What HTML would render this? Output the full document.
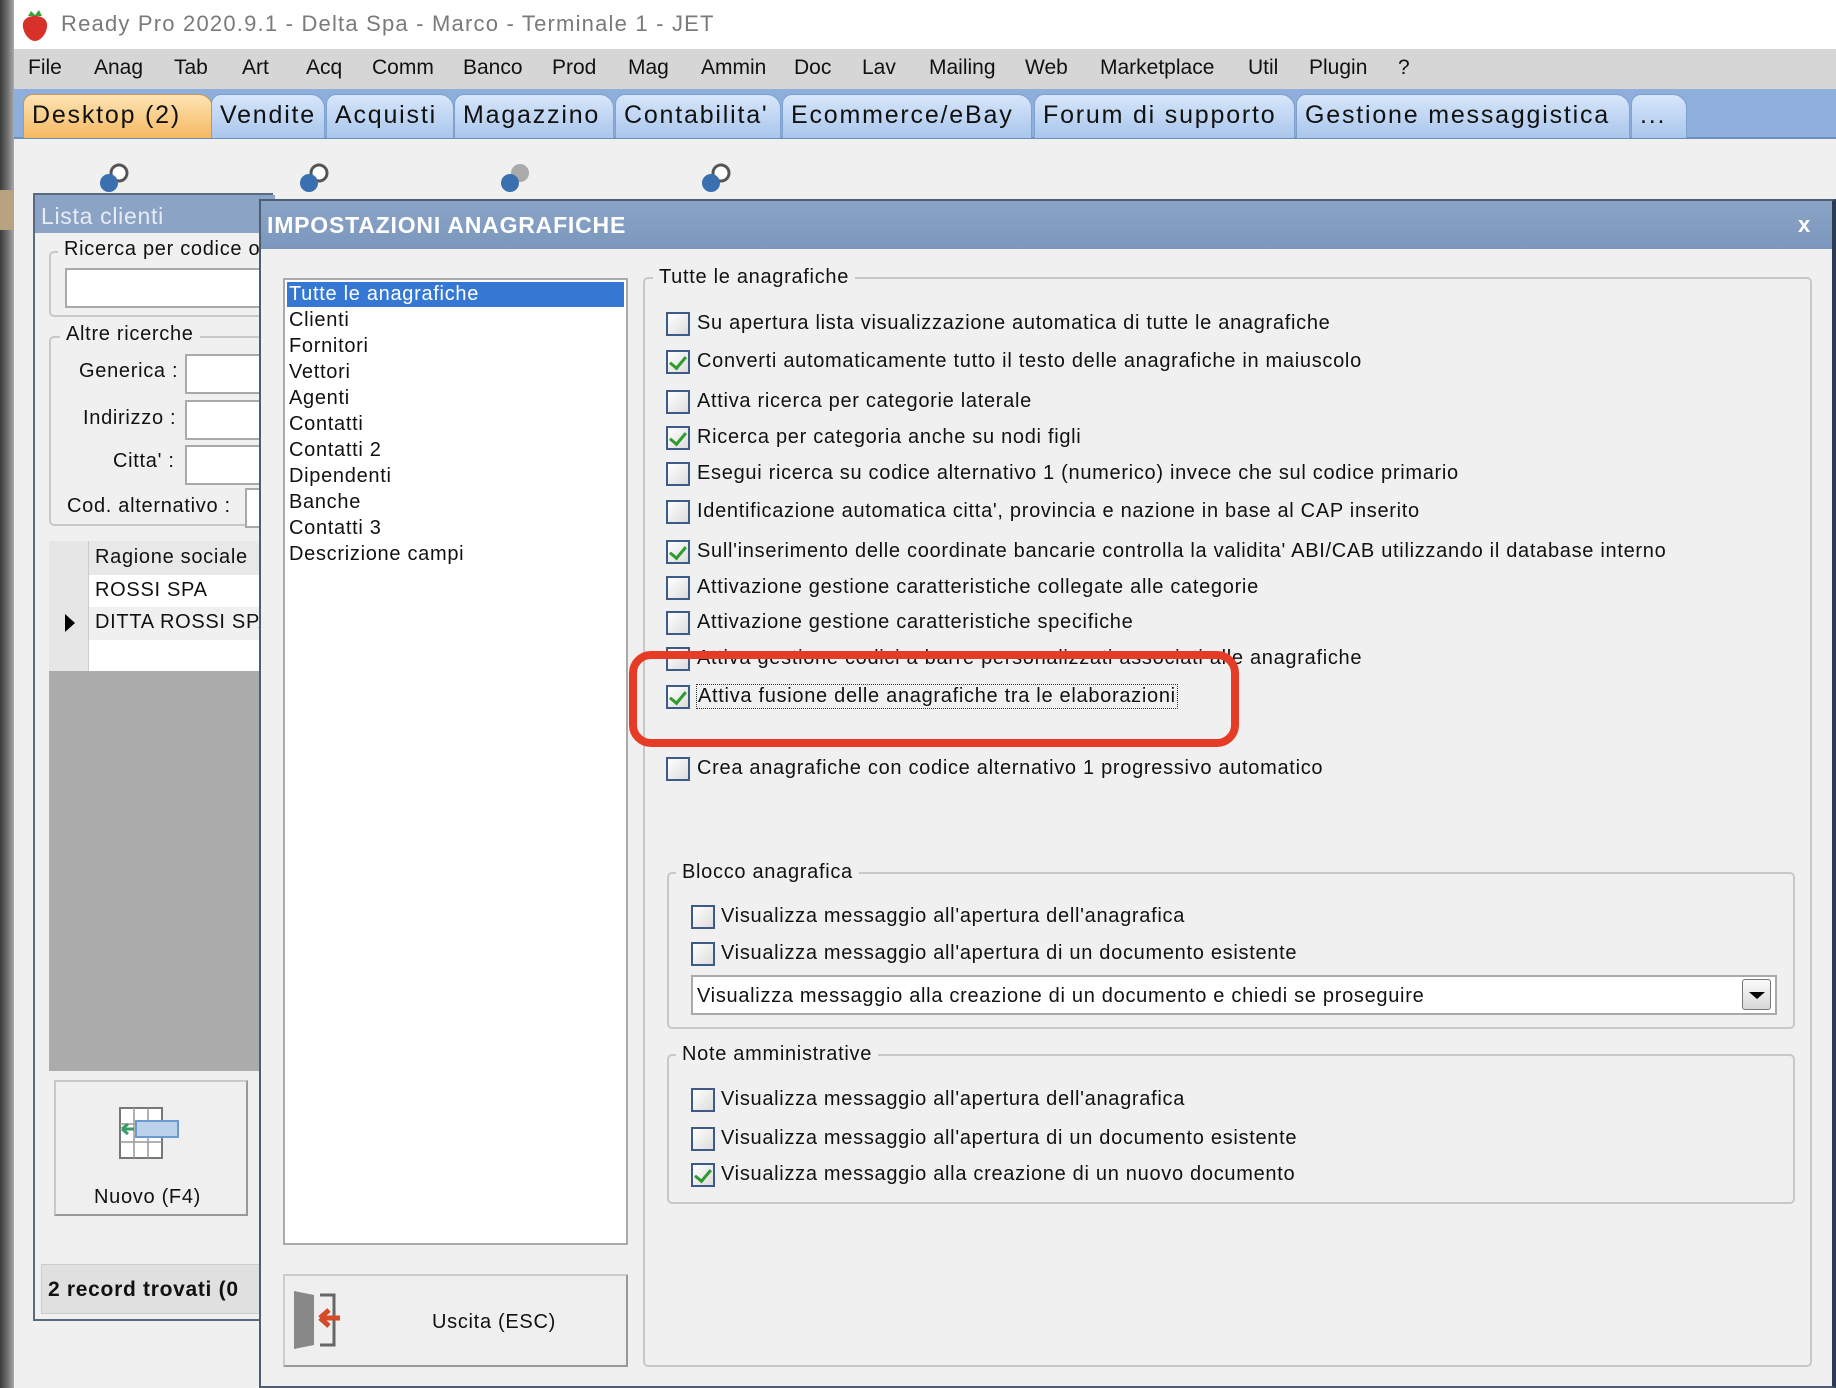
<!DOCTYPE html>
<html><head><meta charset="utf-8">
<style>
*{box-sizing:border-box;margin:0;padding:0}
body{width:1836px;height:1388px;position:relative;overflow:hidden;background:#f0f0f0;font-family:"Liberation Sans","DejaVu Sans",sans-serif;color:#111;font-size:20px;letter-spacing:0.7px}
.a{position:absolute;white-space:nowrap}
.cb{position:absolute;width:24px;height:24px;border:2px solid #3d5b86;background:linear-gradient(135deg,#fff,#dcdcdc)}
.cb.on::after{content:"";position:absolute;left:5px;top:1px;width:7px;height:13px;border:solid #2f9b2f;border-width:0 3px 3px 0;transform:rotate(40deg)}
.grp{position:absolute;border:2px solid #c8c8c8;border-radius:5px}
.gl{position:absolute;background:#f0f0f0;padding:0 6px;white-space:nowrap;font-size:20px}
.inp{position:absolute;background:#fff;border:2px solid #a9a9a9}
.tab{position:absolute;top:94px;height:44px;border:1px solid #7ea0cc;border-bottom:none;border-radius:10px 14px 0 0;background:linear-gradient(#d7e6fa,#a9c6ec);font-size:25px;padding:6px 0 0 8px;white-space:nowrap;letter-spacing:1.8px}
</style></head><body>
<div class="a" style="left:0;top:0;width:14px;height:1388px;background:linear-gradient(90deg,#3a3a3a,#777 60%,#aaa)"></div>
<div class="a" style="left:0;top:190px;width:14px;height:40px;background:#b9a27f"></div>
<div class="a" style="left:14px;top:0;width:1822px;height:49px;background:#fff"></div>
<svg class="a" style="left:20px;top:8px" width="30" height="34" viewBox="0 0 30 34"><path d="M15 8c8 0 13 4 12 11-1 8-7 14-12 14S4 27 3 19C2 12 7 8 15 8z" fill="#d8312a"/><path d="M8 8l3-5 4 4 4-5 3 6z" fill="#3fa03a"/></svg>
<div class="a" style="left:61px;top:11px;font-size:22px;color:#7a7a7a;letter-spacing:1.2px">Ready Pro 2020.9.1 - Delta Spa - Marco - Terminale 1 - JET</div>
<div class="a" style="left:14px;top:49px;width:1822px;height:40px;background:#d6d6d6"></div>
<div class="a" style="top:56px;left:0;width:1836px;font-size:21px;letter-spacing:0">
<span class="a" style="left:28px">File</span><span class="a" style="left:94px">Anag</span><span class="a" style="left:174px">Tab</span><span class="a" style="left:242px">Art</span><span class="a" style="left:306px">Acq</span><span class="a" style="left:372px">Comm</span><span class="a" style="left:463px">Banco</span><span class="a" style="left:552px">Prod</span><span class="a" style="left:628px">Mag</span><span class="a" style="left:701px">Ammin</span><span class="a" style="left:794px">Doc</span><span class="a" style="left:862px">Lav</span><span class="a" style="left:929px">Mailing</span><span class="a" style="left:1025px">Web</span><span class="a" style="left:1100px">Marketplace</span><span class="a" style="left:1248px">Util</span><span class="a" style="left:1309px">Plugin</span><span class="a" style="left:1398px">?</span></div>
<div class="a" style="left:14px;top:89px;width:1822px;height:50px;background:#8eaedb;border-bottom:2px solid #6d8fbd"></div>
<div class="tab" style="left:23px;width:190px;background:linear-gradient(#fde3b4,#f5b961);border-color:#c99650">Desktop (2)</div>
<div class="tab" style="left:211px;width:114px">Vendite</div>
<div class="tab" style="left:326px;width:128px">Acquisti</div>
<div class="tab" style="left:454px;width:160px">Magazzino</div>
<div class="tab" style="left:615px;width:166px">Contabilita'</div>
<div class="tab" style="left:782px;width:250px">Ecommerce/eBay</div>
<div class="tab" style="left:1034px;width:261px">Forum di supporto</div>
<div class="tab" style="left:1296px;width:334px">Gestione messaggistica</div>
<div class="tab" style="left:1631px;width:56px">...</div>
<svg class="a" style="left:95px;top:163px" width="40" height="32"><circle cx="24" cy="10" r="8" fill="#fff" stroke="#555" stroke-width="3"/><circle cx="14" cy="20" r="9" fill="#3a6fb0"/></svg>
<svg class="a" style="left:295px;top:163px" width="40" height="32"><circle cx="24" cy="10" r="8" fill="#fff" stroke="#555" stroke-width="3"/><circle cx="14" cy="20" r="9" fill="#3a6fb0"/></svg>
<svg class="a" style="left:496px;top:163px" width="40" height="32"><circle cx="24" cy="10" r="9" fill="#aaa"/><circle cx="14" cy="20" r="9" fill="#3a6fb0"/></svg>
<svg class="a" style="left:697px;top:163px" width="40" height="32"><circle cx="24" cy="10" r="8" fill="#fff" stroke="#555" stroke-width="3"/><circle cx="14" cy="20" r="9" fill="#3a6fb0"/></svg>
<div class="a" style="left:33px;top:193px;width:240px;height:1128px;background:#f0f0f0;border:2px solid #5a6a80"></div>
<div class="a" style="left:35px;top:195px;width:240px;height:38px;background:#8ba4c6"></div>
<div class="a" style="left:41px;top:203px;font-size:23px;color:#e6ecf4">Lista clienti</div>
<div class="grp" style="left:49px;top:251px;width:230px;height:66px"></div>
<div class="gl" style="left:58px;top:238px">Ricerca per codice o</div>
<div class="inp" style="left:65px;top:268px;width:200px;height:40px"></div>
<div class="grp" style="left:49px;top:336px;width:230px;height:190px"></div>
<div class="gl" style="left:60px;top:323px">Altre ricerche</div>
<div class="a" style="left:79px;top:360px">Generica :</div><div class="inp" style="left:185px;top:354px;width:90px;height:40px"></div>
<div class="a" style="left:83px;top:407px">Indirizzo :</div><div class="inp" style="left:185px;top:400px;width:90px;height:40px"></div>
<div class="a" style="left:113px;top:450px">Citta' :</div><div class="inp" style="left:185px;top:445px;width:90px;height:40px"></div>
<div class="a" style="left:67px;top:495px">Cod. alternativo :</div><div class="inp" style="left:245px;top:488px;width:30px;height:40px"></div>
<div class="a" style="left:49px;top:541px;width:226px;height:530px;background:#ababab"></div>
<div class="a" style="left:49px;top:541px;width:226px;height:130px;background:#fff"></div>
<div class="a" style="left:49px;top:541px;width:40px;height:130px;background:#e6e6e6;border-right:1px solid #ccc"></div>
<div class="a" style="left:89px;top:541px;width:186px;height:34px;background:#e8e8e8"></div>
<div class="a" style="left:95px;top:546px">Ragione sociale</div>
<div class="a" style="left:95px;top:579px">ROSSI SPA</div>
<div class="a" style="left:89px;top:607px;width:186px;height:33px;background:#f0f0f0"></div>
<div class="a" style="left:95px;top:611px">DITTA ROSSI SPA</div>
<div class="a" style="left:65px;top:614px;width:0;height:0;border-left:10px solid #000;border-top:9px solid transparent;border-bottom:9px solid transparent"></div>
<div class="a" style="left:54px;top:1080px;width:194px;height:136px;border:2px solid #c8c8c8;border-bottom-color:#999;border-right-color:#999;background:#efefef"></div>
<svg class="a" style="left:118px;top:1106px" width="64" height="54"><rect x="2" y="2" width="42" height="50" fill="#fff" stroke="#777" stroke-width="2"/><path d="M2 18h42M2 36h42M16 2v50M30 2v50" stroke="#999" stroke-width="1.5"/><rect x="18" y="15" width="42" height="16" fill="#bcd2ea" stroke="#6a9ad0" stroke-width="2"/><path d="M4 23h12M4 23l6-5M4 23l6 5" stroke="#3a9a6a" stroke-width="3" fill="none"/></svg>
<div class="a" style="left:94px;top:1186px">Nuovo (F4)</div>
<div class="a" style="left:41px;top:1264px;width:230px;height:50px;background:#e0e0e0;border:1px solid #ccc"></div>
<div class="a" style="left:48px;top:1278px;font-weight:bold;font-size:21px">2 record trovati (0</div>
<div class="a" style="left:259px;top:199px;width:1577px;height:1189px;background:#f0f0f0;border:2px solid #4d5d72;border-right:4px solid #2a3a50"></div>
<div class="a" style="left:261px;top:201px;width:1571px;height:48px;background:linear-gradient(#8aa4c6,#7b97bd)"></div>
<div class="a" style="left:267px;top:212px;font-size:23px;font-weight:bold;color:#fff;letter-spacing:0.8px">IMPOSTAZIONI ANAGRAFICHE</div>
<div class="a" style="left:1798px;top:212px;font-size:22px;font-weight:bold;color:#fff">x</div>
<div class="a" style="left:283px;top:278px;width:345px;height:967px;background:#fff;border:2px solid #aaa"></div>
<div class="a" style="left:287px;top:282px;width:337px;height:25px;background:#3478d4"></div>
<div class="a" style="left:289px;top:281px;line-height:26px;font-size:20px">
<div style="color:#fff">Tutte le anagrafiche</div><div>Clienti</div><div>Fornitori</div><div>Vettori</div><div>Agenti</div><div>Contatti</div><div>Contatti 2</div><div>Dipendenti</div><div>Banche</div><div>Contatti 3</div><div>Descrizione campi</div></div>
<div class="a" style="left:283px;top:1274px;width:345px;height:93px;border:2px solid #ccc;border-bottom-color:#999;border-right-color:#999;background:#efefef"></div>
<svg class="a" style="left:290px;top:1287px" width="60" height="66"><path d="M30 8h14v50H30" fill="none" stroke="#666" stroke-width="3"/><path d="M4 4l20 4v50l-20 4z" fill="#888"/><path d="M50 31H30M30 31l9-8M30 31l9 8" stroke="#d44a2a" stroke-width="5" fill="none"/></svg>
<div class="a" style="left:432px;top:1311px">Uscita (ESC)</div>
<div class="grp" style="left:643px;top:277px;width:1169px;height:1090px"></div>
<div class="gl" style="left:653px;top:266px">Tutte le anagrafiche</div>
<div class="cb" style="left:666px;top:312px"></div><div class="a" style="left:697px;top:312px">Su apertura lista visualizzazione automatica di tutte le anagrafiche</div>
<div class="cb on" style="left:666px;top:350px"></div><div class="a" style="left:697px;top:350px">Converti automaticamente tutto il testo delle anagrafiche in maiuscolo</div>
<div class="cb" style="left:666px;top:390px"></div><div class="a" style="left:697px;top:390px">Attiva ricerca per categorie laterale</div>
<div class="cb on" style="left:666px;top:426px"></div><div class="a" style="left:697px;top:426px">Ricerca per categoria anche su nodi figli</div>
<div class="cb" style="left:666px;top:462px"></div><div class="a" style="left:697px;top:462px">Esegui ricerca su codice alternativo 1 (numerico) invece che sul codice primario</div>
<div class="cb" style="left:666px;top:500px"></div><div class="a" style="left:697px;top:500px">Identificazione automatica citta', provincia e nazione in base al CAP inserito</div>
<div class="cb on" style="left:666px;top:540px"></div><div class="a" style="left:697px;top:540px">Sull'inserimento delle coordinate bancarie controlla la validita' ABI/CAB utilizzando il database interno</div>
<div class="cb" style="left:666px;top:576px"></div><div class="a" style="left:697px;top:576px">Attivazione gestione caratteristiche collegate alle categorie</div>
<div class="cb" style="left:666px;top:611px"></div><div class="a" style="left:697px;top:611px">Attivazione gestione caratteristiche specifiche</div>
<div class="cb" style="left:666px;top:647px"></div><div class="a" style="left:697px;top:647px">Attiva gestione codici a barre personalizzati associati alle anagrafiche</div>
<div class="cb on" style="left:666px;top:685px"></div><div class="a" style="left:696px;top:684px;border:1px dotted #333;padding:0 1px">Attiva fusione delle anagrafiche tra le elaborazioni</div>
<div class="cb" style="left:666px;top:757px"></div><div class="a" style="left:697px;top:757px">Crea anagrafiche con codice alternativo 1 progressivo automatico</div>
<div class="a" style="left:629px;top:651px;width:610px;height:96px;border:8px solid #e63c27;border-radius:22px"></div>
<div class="grp" style="left:667px;top:872px;width:1128px;height:157px"></div>
<div class="gl" style="left:676px;top:861px">Blocco anagrafica</div>
<div class="cb" style="left:691px;top:905px"></div><div class="a" style="left:721px;top:905px">Visualizza messaggio all'apertura dell'anagrafica</div>
<div class="cb" style="left:691px;top:942px"></div><div class="a" style="left:721px;top:942px">Visualizza messaggio all'apertura di un documento esistente</div>
<div class="inp" style="left:691px;top:975px;width:1086px;height:40px"></div>
<div class="a" style="left:697px;top:985px">Visualizza messaggio alla creazione di un documento e chiedi se proseguire</div>
<div class="a" style="left:1742px;top:979px;width:29px;height:31px;border:1px solid #777;border-radius:3px;background:linear-gradient(#fafafa,#d8d8d8)"></div>
<div class="a" style="left:1749px;top:992px;width:0;height:0;border-top:7px solid #000;border-left:8px solid transparent;border-right:8px solid transparent"></div>
<div class="grp" style="left:667px;top:1054px;width:1128px;height:150px"></div>
<div class="gl" style="left:676px;top:1043px">Note amministrative</div>
<div class="cb" style="left:691px;top:1088px"></div><div class="a" style="left:721px;top:1088px">Visualizza messaggio all'apertura dell'anagrafica</div>
<div class="cb" style="left:691px;top:1127px"></div><div class="a" style="left:721px;top:1127px">Visualizza messaggio all'apertura di un documento esistente</div>
<div class="cb on" style="left:691px;top:1163px"></div><div class="a" style="left:721px;top:1163px">Visualizza messaggio alla creazione di un nuovo documento</div>
</body></html>
